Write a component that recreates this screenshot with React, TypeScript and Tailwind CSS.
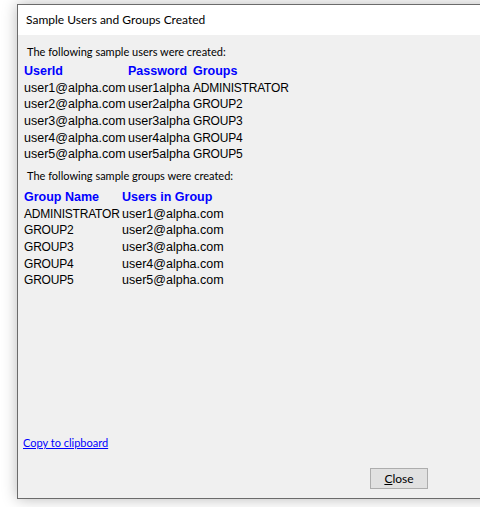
import React from "react";

const users = [
  { id: "user1@alpha.com", password: "user1alpha", group: "ADMINISTRATOR" },
  { id: "user2@alpha.com", password: "user2alpha", group: "GROUP2" },
  { id: "user3@alpha.com", password: "user3alpha", group: "GROUP3" },
  { id: "user4@alpha.com", password: "user4alpha", group: "GROUP4" },
  { id: "user5@alpha.com", password: "user5alpha", group: "GROUP5" },
];

const uiFont = { fontFamily: 'Lato, "Noto Sans", sans-serif' };
const tableFont = { fontFamily: '"Liberation Sans", Arial, sans-serif' };

const App = () => {
  return (
    <div className="w-[480px] h-[507px] overflow-hidden bg-white pt-[4px] pl-[17px]">
      <div className="w-[480px] h-[495px] flex flex-col border-y border-l border-[#6b6b6b] shadow-[0_0_14px_rgba(0,0,0,0.28)]">
        {/* title bar */}
        <div className="h-[30px] bg-white flex items-center pl-[8px] text-[12px] text-black" style={uiFont}>
          Sample Users and Groups Created
        </div>

        <div className="flex-1 flex flex-col bg-[#f0f0f0] text-black">
          <div className="pt-[9px] pl-[9px] text-[11px] leading-[16px]" style={uiFont}>
            The following sample users were created:
          </div>
          <div className="mt-[3px] pl-[6px] text-[12.5px] leading-[16.67px]" style={tableFont}>
            <div className="grid grid-cols-[104px_65px_auto] font-bold text-[#0000ff]">
              <span>UserId</span>
              <span>Password</span>
              <span>Groups</span>
            </div>
            {users.map(u => (
              <div key={u.id} className="grid grid-cols-[104px_65px_auto]">
                <span>{u.id}</span>
                <span>{u.password}</span>
                <span className="text-[12px] tracking-[-0.2px]">{u.group}</span>
              </div>
            ))}
          </div>

          <div className="mt-[5px] pl-[9px] text-[11px] leading-[16px]" style={uiFont}>
            The following sample groups were created:
          </div>
          <div className="mt-[5px] pl-[6px] text-[12.5px] leading-[16.67px]" style={tableFont}>
            <div className="grid grid-cols-[98px_auto] font-bold text-[#0000ff]">
              <span>Group Name</span>
              <span>Users in Group</span>
            </div>
            {users.map(u => (
              <div key={u.group} className="grid grid-cols-[98px_auto]">
                <span className="text-[12px] tracking-[-0.2px]">{u.group}</span>
                <span>{u.id}</span>
              </div>
            ))}
          </div>

          <div className="flex-1" />

          <div className="pl-[5px] text-[11px] leading-[16px]" style={uiFont}>
            <a className="text-[#0000ff] underline cursor-pointer">Copy to clipboard</a>
          </div>

          <div className="mt-[14px] mb-[9px] pl-[352px]">
            <button
              className="w-[58px] h-[21px] border border-[#adadad] bg-[#e1e1e1] text-[12px] leading-none text-black"
              style={uiFont}
            >
              <span className="underline">C</span>lose
            </button>
          </div>
        </div>
      </div>
    </div>
  );
};

export default App;
